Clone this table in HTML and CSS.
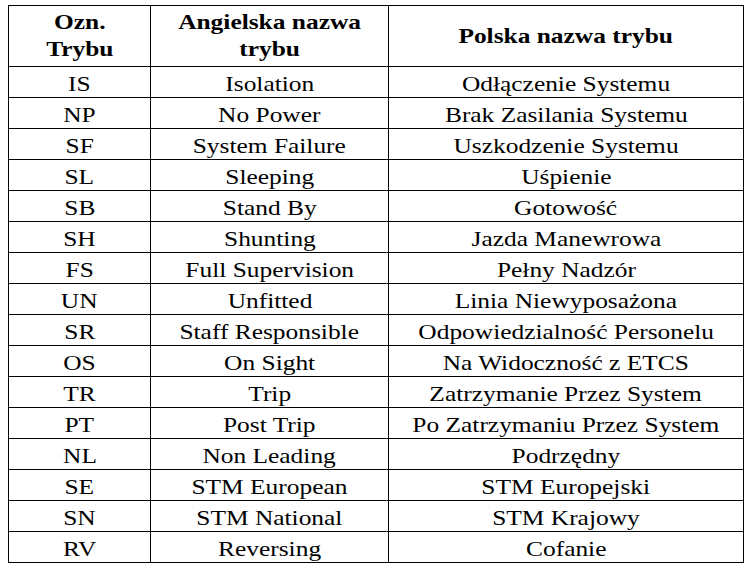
FILE: index.html
```html
<!DOCTYPE html>
<html>
<head>
<meta charset="utf-8">
<title>Tryby ETCS</title>
<link rel="stylesheet" href="styles.css">
</head>
<body>
<table class="modes">
  <colgroup>
    <col class="c-code">
    <col class="c-en">
    <col class="c-pl">
  </colgroup>
  <thead>
    <tr>
      <th><span class="t">Ozn.<br>Trybu</span></th>
      <th><span class="t">Angielska nazwa<br>trybu</span></th>
      <th><span class="t">Polska nazwa trybu</span></th>
    </tr>
  </thead>
  <tbody>
    <tr><td><span class="t">IS</span></td><td><span class="t">Isolation</span></td><td><span class="t">Odłączenie Systemu</span></td></tr>
    <tr><td><span class="t">NP</span></td><td><span class="t">No Power</span></td><td><span class="t">Brak Zasilania Systemu</span></td></tr>
    <tr><td><span class="t">SF</span></td><td><span class="t">System Failure</span></td><td><span class="t">Uszkodzenie Systemu</span></td></tr>
    <tr><td><span class="t">SL</span></td><td><span class="t">Sleeping</span></td><td><span class="t">Uśpienie</span></td></tr>
    <tr><td><span class="t">SB</span></td><td><span class="t">Stand By</span></td><td><span class="t">Gotowość</span></td></tr>
    <tr><td><span class="t">SH</span></td><td><span class="t">Shunting</span></td><td><span class="t">Jazda Manewrowa</span></td></tr>
    <tr><td><span class="t">FS</span></td><td><span class="t">Full Supervision</span></td><td><span class="t">Pełny Nadzór</span></td></tr>
    <tr><td><span class="t">UN</span></td><td><span class="t">Unfitted</span></td><td><span class="t">Linia Niewyposażona</span></td></tr>
    <tr><td><span class="t">SR</span></td><td><span class="t">Staff Responsible</span></td><td><span class="t">Odpowiedzialność Personelu</span></td></tr>
    <tr><td><span class="t">OS</span></td><td><span class="t">On Sight</span></td><td><span class="t">Na Widoczność z ETCS</span></td></tr>
    <tr><td><span class="t">TR</span></td><td><span class="t">Trip</span></td><td><span class="t">Zatrzymanie Przez System</span></td></tr>
    <tr><td><span class="t">PT</span></td><td><span class="t">Post Trip</span></td><td><span class="t">Po Zatrzymaniu Przez System</span></td></tr>
    <tr><td><span class="t">NL</span></td><td><span class="t">Non Leading</span></td><td><span class="t">Podrzędny</span></td></tr>
    <tr><td><span class="t">SE</span></td><td><span class="t">STM European</span></td><td><span class="t">STM Europejski</span></td></tr>
    <tr><td><span class="t">SN</span></td><td><span class="t">STM National</span></td><td><span class="t">STM Krajowy</span></td></tr>
    <tr><td><span class="t">RV</span></td><td><span class="t">Reversing</span></td><td><span class="t">Cofanie</span></td></tr>
  </tbody>
</table>
</body>
</html>
```

FILE: styles.css
```css
html, body {
  background: #ffffff;
}
body {
  margin: 5px 0 0 8px;
  font-family: "Liberation Serif", serif;
  color: #000000;
}
.modes {
  table-layout: fixed;
  width: 736px;
  border-collapse: separate;
  border-spacing: 0;
  border-left: 1px solid #000;
  border-top: 1px solid #000;
  font-family: "Liberation Serif", serif;
}
.c-code { width: 142px; }
.c-en { width: 238px; }
.c-pl { width: 355px; }
.modes th,
.modes td {
  font-family: "Liberation Serif", serif;
  border-right: 1px solid #000;
  border-bottom: 1px solid #000;
  text-align: center;
  padding: 0;
  white-space: nowrap;
}
.modes th {
  height: 60px;
  font-size: 21px;
  font-weight: bold;
  line-height: 27px;
  vertical-align: middle;
}
.modes td {
  height: 30.125px;
  font-size: 21px;
  line-height: 25px;
  vertical-align: top;
  padding-top: 5px;
  box-sizing: border-box;
}
.t {
  display: inline-block;
  font-family: "Liberation Serif", serif;
  transform: scaleX(1.21);
}
```
